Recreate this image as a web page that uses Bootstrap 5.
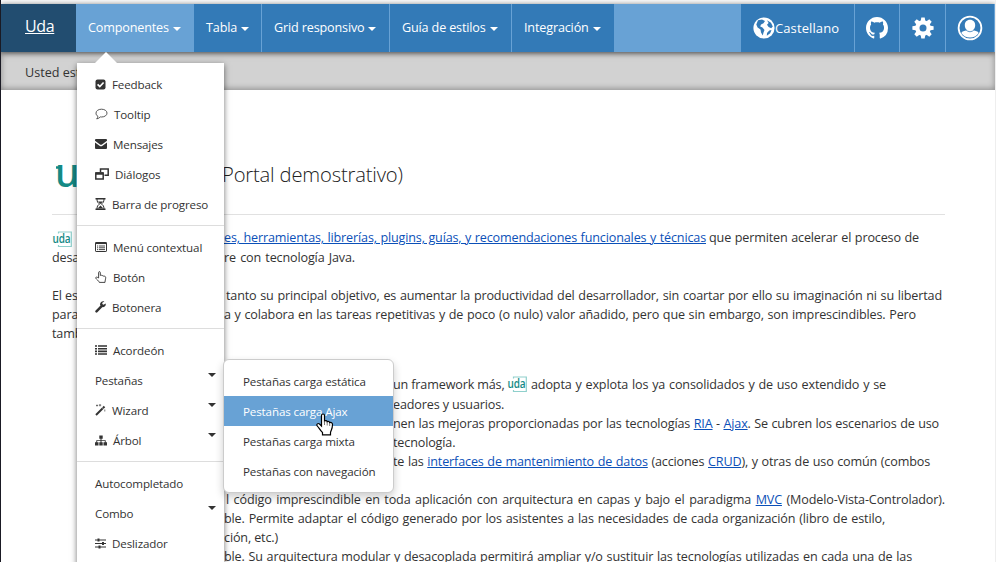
<!DOCTYPE html>
<html lang="es">
<head>
<meta charset="utf-8">
<title>Uda</title>
<link href="https://cdn.jsdelivr.net/npm/bootstrap@5.3.0/dist/css/bootstrap.min.css" rel="stylesheet">
<style>
html,body{height:562px;overflow:hidden}
body{font-family:"Open Sans","Noto Sans",sans-serif;font-size:12.6px;line-height:19px;color:#333;background:#fff}
.page{width:996px;height:562px;border-left:1px solid #1a1a24;border-right:1px solid #eee;box-sizing:border-box;overflow:hidden}
.topbar{height:48px;margin-top:4px;background:#68a2d5;box-shadow:0 1px 6px rgba(0,0,0,.6);z-index:2}
.strip{height:4px;background:#fcfcfc;margin-bottom:-4px}
.brand{width:75px;background:#224d70;color:#fff;font-size:16px;padding:0 0 4px 24px;letter-spacing:-.35px}
.brand:hover{color:#fff}
.mi{height:48px;background:#337ab7;color:#fff;padding:0 0 2px 12px;letter-spacing:-.15px;border-right:1px solid #68a2d5;white-space:nowrap}
.mi.on{background:#68a2d5;padding-left:12px}
.m1{width:118px}.m2{width:68px}.m3{width:128px}.m4{width:122px}.m5{width:103px}
.r1{width:114px}.r2{width:45px}.r3{width:46px}.r4{width:49px}
.cast{font-size:13px;letter-spacing:.1px}
.tri{display:inline-block;width:0;height:0;border:4px solid transparent;border-top-color:currentColor;border-bottom:0;margin-left:4px;margin-top:3px}
.crumb{height:38px;background:#d2d2d2;padding-left:24px;box-shadow:inset 0 -1px 6px rgba(0,0,0,.35);line-height:41px}
.head{height:125px;margin:0 50px 0 51px;border-bottom:1px solid #e1e1e1}
.head .logo{width:170px;height:40px;margin-top:64px}
.ttl{font-size:20.2px;font-weight:300;letter-spacing:-.17px;color:#222;padding-top:70px;line-height:28px}
.ln{height:19px;white-space:nowrap;padding-left:51px;letter-spacing:-.15px}
.ln.tall{height:20px}
.ln .a{width:172px;flex:none}
.ln .s{width:341px;flex:none}
.j{text-align-last:justify;flex:none}
.ln a{color:#0b50b8}
.t{margin-top:13px}
.g{height:19px}
.g.hh{height:13px}
.lg{margin:1px 4px 0 5px}
.sp{margin-left:3px}
.in2{margin-left:2px}
.menu{position:absolute;left:77px;top:63px;width:147px;height:510px;background:#fff;box-shadow:0 2px 6px rgba(0,0,0,.55);padding-top:6px;font-size:11.6px;z-index:3}
.menu:before{content:"";position:absolute;left:18px;top:-11px;border:11px solid transparent;border-top:0;border-bottom-color:#fff}
.it{height:30px;padding-left:18px;white-space:nowrap;letter-spacing:-.13px}
.it svg{flex:none;margin-right:6px}
.it .tri{margin:-10px 8px 0 auto}
.dv{height:1px;background:#ddd;margin:6px 0 6px}
.sub{position:absolute;left:223px;top:359px;width:171px;height:134px;background:#fff;border:1px solid #ccc;border-radius:6px;box-shadow:0 4px 9px rgba(0,0,0,.2);padding-top:6px;z-index:4;font-size:11.6px}
.sub .it{padding-left:19px}
.sub .it.on{background:#68a2d5;color:#fff}
.cur{position:absolute;left:316px;top:413px;z-index:5}
.w1{width:482px}.w2{width:210px}.w3{width:131px}.w4{width:716px}.w5{width:692px}.w6{width:109px}.w7{width:355px}.w8{width:105px}.w9{width:546px}.w10{width:537px}.w12{width:719px}.w13{width:661px}.w14{width:54px}.w15{width:688px}
</style>
<script src="https://cdn.jsdelivr.net/npm/bootstrap@5.3.0/dist/js/bootstrap.bundle.min.js"></script>
</head>
<body>
<svg width="0" height="0" class="d-none"><symbol id="uda" viewBox="0 0 20 16"><path d="M6.500 2.500V1H19.300V15.500H6.500V14" fill="none" stroke="#8fd0cc" stroke-width="1.200"/><text x="0.500" y="12.300" font-family="Open Sans" font-size="12.800" font-weight="600" fill="#148a85" textLength="18" lengthAdjust="spacingAndGlyphs">uda</text></symbol></svg>
<div class="page">
<div class="strip"></div>
<nav class="topbar d-flex position-relative">
<a class="brand d-flex align-items-center" href="#">Uda</a>
<div class="mi on m1 d-flex align-items-center">Componentes<i class="tri"></i></div>
<div class="mi m2 d-flex align-items-center">Tabla<i class="tri"></i></div>
<div class="mi m3 d-flex align-items-center">Grid responsivo<i class="tri"></i></div>
<div class="mi m4 d-flex align-items-center">Guía de estilos<i class="tri"></i></div>
<div class="mi m5 d-flex align-items-center">Integración<i class="tri"></i></div>
<div class="mi r1 ms-auto d-flex align-items-center pb-0"><svg width="22" height="22" viewBox="0 0 22 22"><circle cx="11" cy="11" r="10.6" fill="#fff"/><path d="M5 3.2 9 2.4 12 4 10.5 6.2 8 7.5 7.2 9.5 9.5 10.5 11.5 13 10.5 15.5 9.8 18.5 8 15.5 7.5 12.6 4.6 10.5 3.3 7.4zM14 3.2 18 5.8 19.8 9.5 18.2 11.2 15.6 9.9 14 7.8 15.6 6zM16.3 13.4 18.5 13 17.2 16.2 13.8 18.8 14 16z" fill="#337ab7"/></svg><span class="cast">Castellano</span></div>
<div class="mi r2 p-0 d-flex align-items-center justify-content-center"><svg width="22" height="22" viewBox="0 0 16 16" fill="#fff"><path d="M8 0C3.58 0 0 3.58 0 8c0 3.54 2.29 6.53 5.47 7.59.4.07.55-.17.55-.38 0-.19-.01-.82-.01-1.49-2.01.37-2.53-.49-2.69-.94-.09-.23-.48-.94-.82-1.13-.28-.15-.68-.52-.01-.53.63-.01 1.08.58 1.23.82.72 1.21 1.87.87 2.33.66.07-.52.28-.87.51-1.07-1.78-.2-3.64-.89-3.64-3.95 0-.87.31-1.59.82-2.15-.08-.2-.36-1.02.08-2.12 0 0 .67-.21 2.2.82.64-.18 1.32-.27 2-.27.68 0 1.36.09 2 .27 1.53-1.04 2.2-.82 2.2-.82.44 1.1.16 1.92.08 2.12.51.56.82 1.27.82 2.15 0 3.07-1.87 3.75-3.65 3.95.29.25.54.73.54 1.48 0 1.07-.01 1.93-.01 2.2 0 .21.15.46.55.38A8.013 8.013 0 0 0 16 8c0-4.42-3.58-8-8-8z"/></svg></div>
<div class="mi r3 p-0 d-flex align-items-center justify-content-center"><svg width="22" height="22" viewBox="-11 -11 22 22"><g fill="#fff"><circle r="7.8"/><path id="tooth" d="M-2.5-6-1.7-10.6H1.7L2.5-6V6L1.7 10.6H-1.7L-2.5 6z"/><use href="#tooth" transform="rotate(45)"/><use href="#tooth" transform="rotate(90)"/><use href="#tooth" transform="rotate(135)"/></g><circle r="3.5" fill="#337ab7"/></svg></div>
<div class="mi r4 p-0 d-flex align-items-center justify-content-center"><svg width="26" height="26" viewBox="0 0 26 26"><circle cx="13" cy="13" r="11.4" fill="none" stroke="#fff" stroke-width="1.8"/><path d="M13 4.8c3.2 0 5.2 2.3 5.2 5.5 0 2-.8 3.9-2 5 2.700.5 4.500 1 5.500 2.600C19.600 21 16.700 22.500 13 22.500s-6.600-1.500-8.700-4.600c1-1.600 2.800-2.100 5.500-2.600-1.200-1.100-2-3-2-5 0-3.200 2-5.500 5.200-5.500z" fill="#fff"/><path d="M8.300 14.200q4.700 5.200 9.400 0" fill="none" stroke="#337ab7" stroke-width=".8"/></svg></div>
</nav>
<div class="crumb">Usted está en:</div>
<main>
<div class="head d-flex">
<svg class="logo flex-shrink-0" viewBox="0 0 170 40"><text x="3" y="33" font-family="Noto Sans" font-size="39" font-weight="500" fill="#148a85">u</text><path d="M4 13.500H9" stroke="#148a85" stroke-width="2.500"/></svg>
<h1 class="ttl m-0">Portal demostrativo)</h1>
</div>
<div class="ln tall t d-flex"><span class="a"><svg width="20" height="16"><use href="#uda"/></svg></span><a class="j w1" href="#">es, herramientas, librerías, plugins, guías, y recomendaciones funcionales y técnicas</a><span class="j w2 sp">que permiten acelerar el proceso de</span></div>
<div class="ln d-flex"><span class="a">desa</span><span class="j w3">re con tecnología Java.</span></div>
<div class="g"></div>
<div class="ln d-flex"><span class="a">El es</span><span class="j w4 in2">tanto su principal objetivo, es aumentar la productividad del desarrollador, sin coartar por ello su imaginación ni su libertad</span></div>
<div class="ln d-flex"><span class="a">para</span><span class="j w5">a y colabora en las tareas repetitivas y de poco (o nulo) valor añadido, pero que sin embargo, son imprescindibles. Pero</span></div>
<div class="ln d-flex"><span class="a">tamb</span></div>
<div class="g"></div><div class="g hh"></div>
<div class="ln tall d-flex"><span class="s"></span><span class="j w6">un framework más,</span><svg class="lg" width="20" height="16"><use href="#uda"/></svg><span class="j w7">adopta y explota los ya consolidados y de uso extendido y se</span></div>
<div class="ln d-flex"><span class="s"></span><span class="j w8">eadores y usuarios.</span></div>
<div class="ln d-flex"><span class="s"></span><span class="j w9">nen las mejoras proporcionadas por las tecnologías <a href="#">RIA</a> - <a href="#">Ajax</a>. Se cubren los escenarios de uso</span></div>
<div class="ln d-flex"><span class="s"></span><span>tecnología.</span></div>
<div class="ln d-flex"><span class="s"></span><span class="j w10">te las <a href="#">interfaces de mantenimiento de datos</a> (acciones <a href="#">CRUD</a>), y otras de uso común (combos</span></div>
<div class="g"></div>
<div class="ln d-flex"><span class="a"></span><span class="j w12 in2">l código imprescindible en toda aplicación con arquitectura en capas y bajo el paradigma <a href="#">MVC</a> (Modelo-Vista-Controlador).</span></div>
<div class="ln d-flex"><span class="a"></span><span class="j w13">ble. Permite adaptar el código generado por los asistentes a las necesidades de cada organización (libro de estilo,</span></div>
<div class="ln d-flex"><span class="a"></span><span class="j w14">ción, etc.)</span></div>
<div class="ln d-flex"><span class="a"></span><span class="j w15">ble. Su arquitectura modular y desacoplada permitirá ampliar y/o sustituir las tecnologías utilizadas en cada una de las</span></div>
</main>
</div>

<div class="menu">
<div class="it d-flex align-items-center"><svg width="11" height="11" viewBox="0 0 11 11"><rect x=".5" y=".5" width="10" height="10" rx="2" fill="#333"/><path d="M2.600 5.300 4.800 7.500 8.600 3.500" fill="none" stroke="#fff" stroke-width="1.700"/></svg>Feedback</div>
<div class="it d-flex align-items-center"><svg width="13" height="12" viewBox="0 0 13 12"><path d="M6.500 1.200c3.200 0 5.500 1.700 5.500 3.900S9.700 9 6.500 9l-1.100-.1C4.400 10 3 10.700 1.700 10.900c.8-.8 1.200-1.500 1.200-2.600C1.600 7.600 1 6.400 1 5.100c0-2.200 2.300-3.900 5.500-3.900z" fill="none" stroke="#444" stroke-width=".9"/></svg>Tooltip</div>
<div class="it d-flex align-items-center"><svg width="12" height="10" viewBox="0 0 12 10" fill="#333"><path d="M1 0h10q1 0 1 1v.8L7 5.500Q6 6.200 5 5.500L0 1.800V1q0-1 1-1zM0 3.400 4.500 6.700Q6 7.700 7.500 6.700L12 3.400V9q0 1-1 1H1Q0 10 0 9z"/></svg>Mensajes</div>
<div class="it d-flex align-items-center"><svg width="14" height="12" viewBox="0 0 14 12" fill="none" stroke="#333" stroke-width="1.500"><path d="M5.500 4V1h7.700v6.200H9.500M.8 5h7.400v6H.8z"/><path d="M.8 5.500h7.400" stroke-width="2.500"/></svg>Diálogos</div>
<div class="it d-flex align-items-center"><svg width="11" height="12" viewBox="0 0 11 12"><path d="M.5.800h10M.5 11.200h10" stroke="#333" stroke-width="1.500"/><path d="M2 1c0 3 1 4 2.600 5C3 7 2 8 2 11M9 1c0 3-1 4-2.600 5C8 7 9 8 9 11" fill="none" stroke="#333"/><path d="M3 3.600h5L5.500 6zM2.600 10.500 5.500 7.500 8.400 10.500z" fill="#333"/></svg>Barra de progreso</div>
<div class="dv"></div>
<div class="it d-flex align-items-center"><svg width="12" height="10" viewBox="0 0 12 10"><rect x=".5" y=".5" width="11" height="9" rx=".6" fill="none" stroke="#333"/><path d="M.5 1.200h11" stroke="#333" stroke-width="1.700"/><path d="M2 4h1.200M4 4h6M2 5.800h1.200M4 5.800h6M2 7.600h1.200M4 7.600h6" stroke="#444"/></svg>Menú contextual</div>
<div class="it d-flex align-items-center"><svg width="12" height="12" viewBox="0 0 12 12"><path d="M3.600 7V1.600c0-1.300 1.700-1.300 1.700 0V4.500c.6-.6 1.500-.4 1.700.3.600-.4 1.500-.2 1.700.5.9-.4 2 .1 2 1.200 0 2-.7 2.700-.7 4.900H4.300C4 9.800 1.200 8.300.8 7.200c-.3-1 .8-1.500 1.500-.9z" fill="none" stroke="#333" stroke-width=".9"/></svg>Botón</div>
<div class="it d-flex align-items-center"><svg width="11" height="12" viewBox="0 0 11 12"><path d="M1.500 10.300 6.600 5.200" stroke="#333" stroke-width="2.500" stroke-linecap="round"/><path d="M10.700 2.500 8.500 3.700 7.300 3V1.700L9.400.4C6.700-.4 4.700 1.600 5.100 4L7 6.100c2.500.4 4.200-1.200 3.700-3.600z" fill="#333"/></svg>Botonera</div>
<div class="dv"></div>
<div class="it d-flex align-items-center"><svg width="12" height="10" viewBox="0 0 12 10"><path d="M0 1h2M3 1h9M0 3.700h2M3 3.700h9M0 6.400h2M3 6.400h9M0 9h2M3 9h9" stroke="#333" stroke-width="1.600"/></svg>Acordeón</div>
<div class="it d-flex align-items-center">Pestañas<i class="tri"></i></div>
<div class="it d-flex align-items-center"><svg width="11" height="12" viewBox="0 0 11 12"><path d="M1 11 9.500 2.500" stroke="#333" stroke-width="2"/><path d="M7 3.500 8.600 5" stroke="#fff" stroke-width=".6"/><path d="M2 .5v2M1 1.500h2M5 0v2.400M3.800 1.200h2.400M9.800 5.500v2" stroke="#555" stroke-width=".8"/></svg>Wizard<i class="tri"></i></div>
<div class="it d-flex align-items-center"><svg width="12" height="11" viewBox="0 0 12 11" fill="#333"><path d="M4.300.5h3.400v3.300H6.500v1.400h4.200v2h1.300v3.300H8.500V7.200h1.300V6H6.500v1.200h1.200v3.300H4.300V7.200h1.200V6H2.200v1.200h1.300v3.300H0V7.200h1.300v-2h4.200V3.800H4.300z"/></svg>Árbol<i class="tri"></i></div>
<div class="dv"></div>
<div class="it d-flex align-items-center">Autocompletado</div>
<div class="it d-flex align-items-center">Combo<i class="tri"></i></div>
<div class="it d-flex align-items-center"><svg width="11" height="11" viewBox="0 0 11 11" stroke="#333"><path d="M0 2h11M0 5.500h11M0 9h11"/><path d="M3.500.4v3.200M8 3.900v3.200M4.500 7.400v3.200" stroke-width="2"/></svg>Deslizador</div>
</div>
<div class="sub">
<div class="it d-flex align-items-center">Pestañas carga estática</div>
<div class="it on d-flex align-items-center">Pestañas carga Ajax</div>
<div class="it d-flex align-items-center">Pestañas carga mixta</div>
<div class="it d-flex align-items-center">Pestañas con navegación</div>
</div>
<svg class="cur" width="18" height="23" viewBox="0 0 18 23"><path d="M5.500 13V2.500c0-2 3-2 3 0V8c.8-.8 2.500-.5 2.700.7.900-.6 2.200-.2 2.400.9 1.500-.6 2.900.2 2.900 1.800 0 4.600-1.500 5.600-2 8.100v2.300H6.500v-2.300C4.300 17.600 3 14.800 1.200 12.900.100 11.200 2 9.800 3.500 11z" fill="#fff" stroke="#000" stroke-width="1.200"/><path d="M8.500 8v4M11.200 9v3.500M13.700 10v3" stroke="#555" fill="none" stroke-width=".8"/></svg>
</body>
</html>
